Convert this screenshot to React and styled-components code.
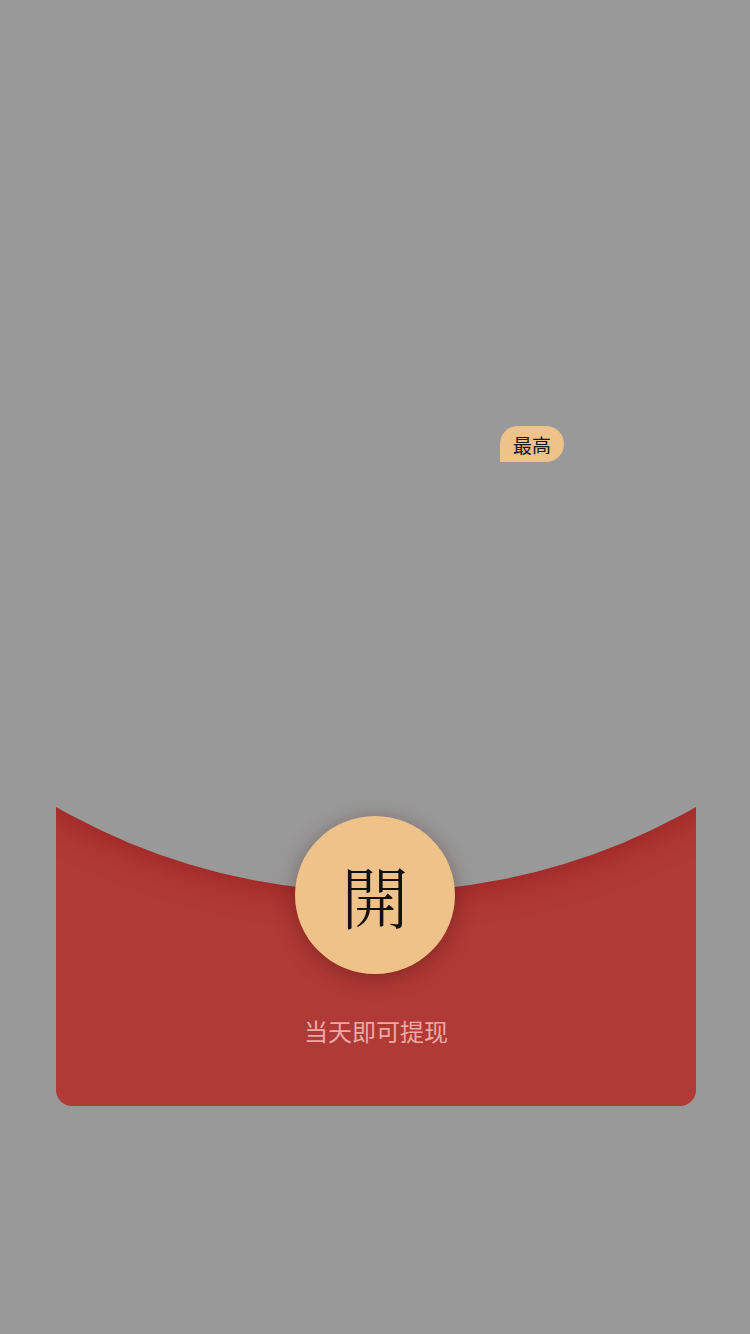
import React from 'react';
import styled, { createGlobalStyle } from 'styled-components';

const GlobalStyle = createGlobalStyle`
  html, body {
    margin: 0;
    padding: 0;
    background: #999999;
  }
  body {
    font-family: "Noto Sans", "Noto Sans CJK SC", sans-serif;
  }
`;

const Page = styled.div`
  width: 750px;
  min-height: 1334px;
  padding-top: 426px;
  box-sizing: border-box;
  background: #999999;
`;

const BadgeRow = styled.div`
  display: flex;
  justify-content: flex-end;
  padding-right: 186px;
`;

const Badge = styled.span`
  display: flex;
  align-items: center;
  justify-content: center;
  width: 64px;
  height: 36px;
  border-radius: 18px 18px 18px 0;
  background: #efc28a;
  color: #1a1a1a;
  font-family: "Noto Sans CJK SC", sans-serif;
  font-size: 19px;
`;

const Envelope = styled.div`
  position: relative;
  margin: 338px 0 0 56px;
  width: 640px;
  height: 306px;
  border-radius: 0 0 16px 16px;
  background: #b03a36;
  overflow: hidden;
  display: flex;
  flex-direction: column;
  align-items: center;

  /* grey arc cut out of the envelope top */
  &::before {
    content: '';
    position: absolute;
    left: 50%;
    top: -1198px;
    width: 1290px;
    height: 1290px;
    margin-left: -645px;
    border-radius: 50%;
    background: #999999;
    box-shadow: 0 0 34px rgba(130, 10, 12, 0.55);
  }
`;

const OpenButton = styled.button`
  position: relative;
  z-index: 1;
  margin: 16px 2px 0 0;
  width: 160px;
  height: 158px;
  border: none;
  border-radius: 50%;
  padding: 0;
  background: #efc28a;
  box-shadow: 0 4px 22px rgba(60, 0, 0, 0.35);
  color: #111;
  font-family: "Noto Serif CJK TC", "Noto Serif CJK SC", "Noto Sans CJK TC", serif;
  font-weight: 300;
  font-size: 68px;
  line-height: 1;
  display: flex;
  align-items: center;
  justify-content: center;
`;

const Hint = styled.p`
  position: relative;
  z-index: 1;
  margin: 40px 0 0;
  color: #eba9a4;
  font-family: "Noto Sans CJK SC", sans-serif;
  font-size: 24px;
  line-height: 34px;
`;

export default function App() {
  return (
    <>
      <GlobalStyle />
      <Page>
        <BadgeRow>
          <Badge>最高</Badge>
        </BadgeRow>
        <Envelope>
          <OpenButton>開</OpenButton>
          <Hint>当天即可提现</Hint>
        </Envelope>
      </Page>
    </>
  );
}
